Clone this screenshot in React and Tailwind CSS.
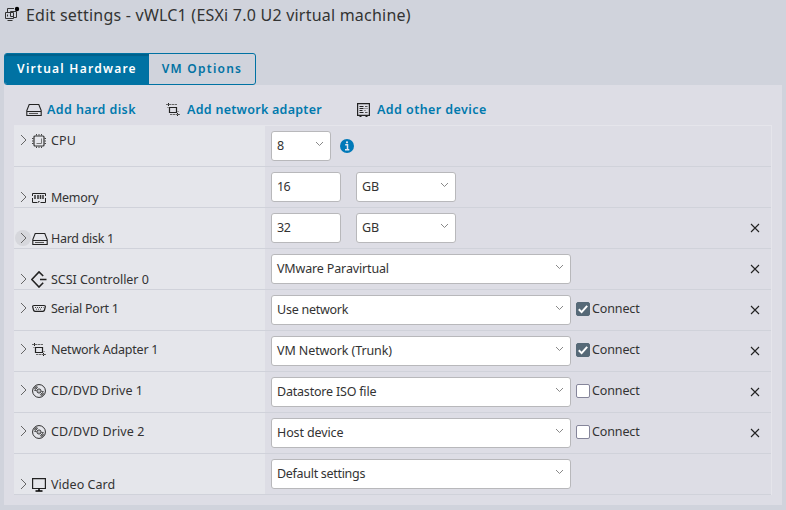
import React from "react";

const Svg = ({ w, h, vb, className = "", sw = 1, children }) => (
  <svg width={w} height={h} viewBox={vb || `0 0 ${w} ${h}`} fill="none" stroke="#222" strokeWidth={sw} className={"shrink-0 " + className}>
    {children}
  </svg>
);

const VmIcon = () => (
  <Svg w={16} h={16}>
    <path d="M3.5 6V2.500H10M6.500 5.500h6v6h-3M1.500 6.500h8v6h-8zM6.500 5.500v5h3M3.500 10.500v-2M3.500 14.500h5" stroke="#333" />
    <circle cx="13" cy="3" r="2.200" fill="#000" stroke="none" />
  </Svg>
);
const DiskIcon = () => (
  <Svg w={16} h={14} sw={1.1}>
    <path d="M3.200 1.500h9.600L15.200 7.500V12.500H.8V7.500zM1 8.500h14" />
    <path d="M3 10.500h9" stroke="#555" />
  </Svg>
);
const NetIcon = () => (
  <Svg w={14} h={14}>
    <path d="M3.500 4.500h7v5h-7z" strokeWidth="1.200" />
    <path d="M2.500 0v3M1.500 1v1M11.500 10v3M12.500 11v1" strokeWidth="1" />
    <path d="M0 1.500h11M4 11.500h10" stroke="#666" strokeDasharray="2.500 .500" />
    <path d="M1 4.500h2M11 8.500h2" stroke="#999" />
  </Svg>
);
const DeviceIcon = () => (
  <Svg w={13} h={14}>
    <path d="M.6.6h11.800v11.800H.6zM2.500 13.300h2M8.500 13.300h2" strokeWidth="1.200" />
    <path d="M2.500 3.500h4M2.500 5.500h4M2.500 7.500h3M2.500 9.500h4" />
    <path d="M8 3.500h2.500M7.500 5.500h1M9.500 5.500h1M7.500 7.500h1M8 9.500h2.500" stroke="#555" />
  </Svg>
);
const CpuIcon = () => (
  <Svg w={14} h={14}>
    <rect x="2" y="2" width="10" height="10" rx="1" strokeWidth="1.200" stroke="#333" />
    <path d="M4.500 9.500h5v-5" stroke="#777" />
    <path d="M4.500 0v1.500M7 0v1.500M9.500 0v1.500M4.500 12.500v1.500M7 12.500v1.500M9.500 12.500v1.500M0 4.500h1.500M0 7h1.500M0 9.500h1.500M12.500 4.500h1.500M12.500 7h1.500M12.500 9.500h1.500" stroke="#444" />
  </Svg>
);
const MemIcon = () => (
  <Svg w={14} h={11}>
    <path d="M.5 3V.5h13V3M.5 5V9.500h5M13.500 5V9.500h-5M6.500 9.500V8.500h1" />
    <path d="M3 2v4M6 2v4M8.500 2v4M11 2v4" strokeWidth="1.500" stroke="#333" />
  </Svg>
);
const ScsiIcon = () => (
  <Svg w={16} h={17} sw={1.6}>
    <path d="M12.200 5L8 .9.8 8.500 8 16l4.200-4.200M9 8.500h6.500" />
  </Svg>
);
const SerialIcon = () => (
  <Svg w={14} h={9}>
    <path d="M2 1.500h10c1 0 1.500.5 1.300 1.300l-.8 3.200c-.2.900-.8 1.300-1.500 1.300H3c-.7 0-1.300-.4-1.500-1.300L.7 2.800C.5 2 1 1.500 2 1.500z" strokeWidth="1.200" />
    <path d="M3 3.500h8.500M4 5.200h6" stroke="#444" strokeDasharray="1 1" />
  </Svg>
);
const DiscIcon = () => (
  <Svg w={14} h={14} vb="0 0 15 15">
    <circle cx="7.500" cy="7.500" r="6.900" />
    <circle cx="7.500" cy="7.500" r="2.200" />
    <circle cx="7.500" cy="7.500" r=".6" fill="#222" stroke="none" />
    <path d="M3.200 6.500a4.500 4.500 0 0 1 3.300-3.300M2 5.500a6 6 0 0 1 3.500-3.500M11.800 8.500a4.500 4.500 0 0 1-3.300 3.300M13 9.500a6 6 0 0 1-3.500 3.500M5.500 5.500l-2-2M9.500 9.500l2 2M5 7H2.500M10 8h2.500" stroke="#444" />
  </Svg>
);
const VideoIcon = () => (
  <Svg w={14} h={14}>
    <path d="M.6.6h12.800v9.900H.6z" strokeWidth="1.200" />
    <path d="M7 10.500v2.500M3.500 13h7" strokeWidth="1.500" stroke="#000" />
  </Svg>
);

const Down = () => (
  <Svg w={9} h={6} className="mb-1">
    <path d="M1 1l3.500 3.500L8 1" stroke="#888" />
  </Svg>
);

const Box = ({ w, children, select = true, ls = "" }) => (
  <div className={`flex h-[30px] shrink-0 items-center justify-between rounded-[3px] border border-[#b8b8bb] bg-white pl-[5px] pr-1.5 ${w} ${ls}`}>
    <span>{children}</span>
    {select && <Down />}
  </div>
);

const Connect = ({ on }) => (
  <label className="mb-0.5 ml-[5px] flex h-4 items-center">
    <span className={`flex size-3.5 items-center justify-center rounded-[2px] border ${on ? "border-[#566977] bg-[#566977]" : "border-[#85859a] bg-white"}`}>
      {on && (
        <svg width="12" height="12" viewBox="0 0 12 12" fill="none" stroke="#fff" strokeWidth="2" className="shrink-0">
          <path d="M1.800 6.300l2.800 2.800 5.600-6.300" />
        </svg>
      )}
    </span>
    <span className="ml-0.5 tracking-[-0.12px]">Connect</span>
  </label>
);

const InfoIcon = () => (
  <svg width="14" height="14" viewBox="0 0 14 14" className="ml-[9px]">
    <circle cx="7" cy="7" r="7" fill="#0079b8" />
    <path d="M5.200 5.800h2.300v4.700M5 10.700h4.300" stroke="#e4e7ef" strokeWidth="1.500" fill="none" />
    <circle cx="7" cy="3.300" r="1.100" fill="#e4e7ef" />
  </svg>
);

const rows = [
  { name: "CPU", icon: <CpuIcon />, pad: "pt-[7px]", ls: "tracking-[0.1px]", body: <><Box w="w-[60px]">8</Box><InfoIcon /></> },
  { name: "Memory", icon: <MemIcon />, pad: "pt-[23px]", ls: "tracking-[-0.3px]", body: <><Box w="w-[70px]" ls="tracking-[-0.7px]" select={false}>16</Box><div className="w-[15px]" /><Box w="w-[100px]">GB</Box></> },
  { name: "Hard disk 1", icon: <DiskIcon />, pad: "pt-[23px]", ls: "tracking-[-0.3px]", x: true, hover: true, body: <><Box w="w-[70px]" ls="tracking-[-0.3px]" select={false}>32</Box><div className="w-[15px]" /><Box w="w-[100px]">GB</Box></> },
  { name: "SCSI Controller 0", icon: <ScsiIcon />, pad: "pt-[23px]", ls: "tracking-[-0.03px]", x: true, body: <Box w="w-[300px]" ls="tracking-[-0.15px]">VMware Paravirtual</Box> },
  { name: "Serial Port 1", icon: <SerialIcon />, pad: "pt-[11px]", ls: "tracking-[-0.25px]", x: true, body: <><Box w="w-[300px]" ls="tracking-[-0.25px]">Use network</Box><Connect on /></> },
  { name: "Network Adapter 1", icon: <NetIcon />, pad: "pt-[11px]", ls: "tracking-[-0.22px]", x: true, body: <><Box w="w-[300px]" ls="tracking-[-0.1px]">VM Network (Trunk)</Box><Connect on /></> },
  { name: "CD/DVD Drive 1", icon: <DiscIcon />, pad: "pt-[11px]", ls: "tracking-[0px]", x: true, body: <><Box w="w-[300px]" ls="tracking-[-0.2px]">Datastore ISO file</Box><Connect /></> },
  { name: "CD/DVD Drive 2", icon: <DiscIcon />, pad: "pt-[11px]", ls: "tracking-[0.12px]", x: true, body: <><Box w="w-[300px]" ls="tracking-[-0.12px]">Host device</Box><Connect /></> },
  { name: "Video Card", icon: <VideoIcon />, pad: "pt-[23px]", ls: "tracking-[0.05px]", body: <Box w="w-[300px]" ls="tracking-[-0.3px]">Default settings</Box> },
];

const Row = ({ r }) => (
  <div className="flex h-[41px] border-b border-[#d0d2da]">
    <div className={`flex w-[251px] shrink-0 items-start bg-[#e5e6eb] pl-px ${r.pad}`}>
      <span className={`-mt-px flex size-4 items-center justify-center rounded-full ${r.hover ? "bg-[#d6d7dc]" : ""}`}>
        <Svg w={7} h={12}><path d="M1 1l5 5-5 5" stroke="#666" /></Svg>
      </span>
      <span className={`flex h-4 w-[21px] items-center ${/^(SCSI|Serial)/.test(r.name) ? "-mt-px" : ""} ${r.name.startsWith("SCSI") ? "" : "pl-px"}`}>{r.icon}</span>
      <span className={`-ml-px whitespace-nowrap leading-4 ${r.ls}`}>{r.name}</span>
    </div>
    <div className="flex flex-1 items-center pl-1.5">
      {r.body}
      {r.x && <Svg w={10} h={10} className="ml-auto mr-[11px]"><path d="M1 1l8 8M9 1l-8 8" strokeWidth="1.100" /></Svg>}
    </div>
  </div>
);

export default function App() {
  return (
    <div className="h-[510px] w-[786px] overflow-hidden bg-[#d0d3dc] px-1 font-['Noto_Sans',sans-serif] text-[12.5px] text-[#333]">
      <header className="flex h-[53px] items-start">
        <div className="mt-[6px]"><VmIcon /></div>
        <h1 className="ml-1.5 mt-[3px] whitespace-nowrap text-base leading-6 tracking-[0.22px]">Edit settings - vWLC1 (ESXi 7.0 U2 virtual machine)</h1>
      </header>
      <div className="flex h-8 w-[252px] overflow-hidden rounded-[3px] border border-[#0072a3] text-xs font-semibold tracking-[1.25px] text-[#0072a3]">
        <div className="flex w-36 items-center justify-center bg-[#0072a3] text-white shadow-[inset_0_2px_1px_#00608a]">Virtual Hardware</div>
        <div className="flex flex-1 items-center justify-center">VM Options</div>
      </div>
      <main className="h-[420px] w-[778px] bg-[#dddde5] pl-2.5 pr-2.5">
        <div className="flex h-10 items-center pl-3 pt-2.5 text-[12.5px] font-semibold text-[#0079ad]">
          <div className="flex w-[140px] items-center gap-[5px] whitespace-nowrap tracking-[0.4px]"><DiskIcon />Add hard disk</div>
          <div className="flex w-[191px] items-center gap-[7px] whitespace-nowrap tracking-[0.27px]"><NetIcon />Add network adapter</div>
          <div className="flex items-center gap-[7px] whitespace-nowrap tracking-[0.43px]"><DeviceIcon />Add other device</div>
        </div>
        <div className="border-r border-t border-[#e5e5eb]">
          {rows.map((r) => <Row key={r.name} r={r} />)}
        </div>
      </main>
    </div>
  );
}
